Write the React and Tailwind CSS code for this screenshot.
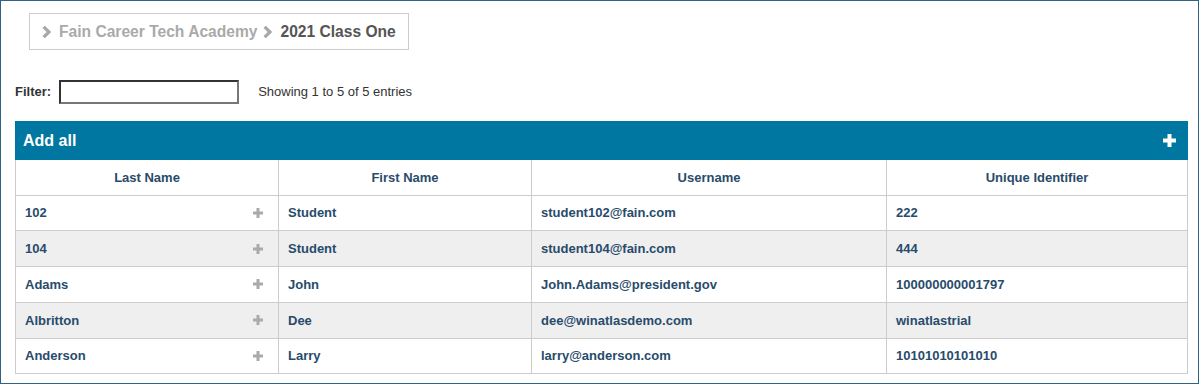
import React from "react";

const ROWS = [
  { last: "102", first: "Student", user: "student102@fain.com", uid: "222" },
  { last: "104", first: "Student", user: "student104@fain.com", uid: "444" },
  { last: "Adams", first: "John", user: "John.Adams@president.gov", uid: "100000000001797" },
  { last: "Albritton", first: "Dee", user: "dee@winatlasdemo.com", uid: "winatlastrial" },
  { last: "Anderson", first: "Larry", user: "larry@anderson.com", uid: "10101010101010" },
];

function Chevron() {
  return (
    <svg width="9" height="12" viewBox="0 0 9 12" className="shrink-0">
      <path d="M1.6 0.8 L7 6 L1.6 11.2" fill="none" stroke="#a8a8a8" strokeWidth="3.2" />
    </svg>
  );
}

function Plus({ size = 10, color = "#aaa", thick = 3 }) {
  const h = size / 2;
  return (
    <svg width={size} height={size} viewBox={`0 0 ${size} ${size}`}>
      <rect x={h - thick / 2} y="0" width={thick} height={size} fill={color} />
      <rect x="0" y={h - thick / 2} width={size} height={thick} fill={color} />
    </svg>
  );
}

export default function App() {
  return (
    <div
      className="w-[1199px] h-[384px] border border-[#2f6485] bg-white pt-[12px] px-[14px]"
      style={{ fontFamily: '"Liberation Sans", Arial, sans-serif' }}
    >
      <div className="ml-[14px] w-[380px] h-[37px] border border-[#cccccc] flex items-center pl-[12px] text-[15.6px] font-bold">
        <Chevron />
        <span className="ml-[8px] text-[#aaaaaa]">Fain Career Tech Academy</span>
        <span className="ml-[6px]"><Chevron /></span>
        <span className="ml-[8px] text-[#555555]">2021 Class One</span>
      </div>

      <div className="mt-[30px] flex items-center h-[24px] text-[13px]">
        <span className="font-bold text-[#333]">Filter:</span>
        <input
          type="text"
          className="ml-[8px] w-[180px] h-[24px] border-2 border-t-[#333] border-l-[#333] border-b-[#777] border-r-[#777] outline-none"
        />
        <span className="ml-[19px] text-[#333]">Showing 1 to 5 of 5 entries</span>
      </div>

      <div className="mt-[17px] w-[1173px]">
        <div className="h-[39px] bg-[#0077a0] flex items-center justify-between pl-[8px] pr-[12px]">
          <span className="text-white font-bold text-[16px]">Add all</span>
          <Plus size={13} color="#ffffff" thick={4} />
        </div>
        <table className="w-full border-collapse text-[13px] font-bold text-[#284b6b] table-fixed">
          <colgroup>
            <col className="w-[263px]" />
            <col className="w-[253px]" />
            <col className="w-[355px]" />
            <col />
          </colgroup>
          <thead>
            <tr className="h-[35px]">
              {["Last Name", "First Name", "Username", "Unique Identifier"].map((h) => (
                <th key={h} className="border border-[#cccccc] border-t-0 font-bold text-center">
                  {h}
                </th>
              ))}
            </tr>
          </thead>
          <tbody>
            {ROWS.map((r, i) => (
              <tr key={r.last} className={`h-[35.8px] ${i % 2 === 1 ? "bg-[#efefef]" : "bg-white"}`}>
                <td className="border border-[#cccccc] pl-[9px] pr-[15px]">
                  <div className="flex items-center justify-between">
                    <span>{r.last}</span>
                    <Plus />
                  </div>
                </td>
                <td className="border border-[#cccccc] px-[9px]">{r.first}</td>
                <td className="border border-[#cccccc] px-[9px]">{r.user}</td>
                <td className="border border-[#cccccc] px-[9px]">{r.uid}</td>
              </tr>
            ))}
          </tbody>
        </table>
      </div>
    </div>
  );
}
